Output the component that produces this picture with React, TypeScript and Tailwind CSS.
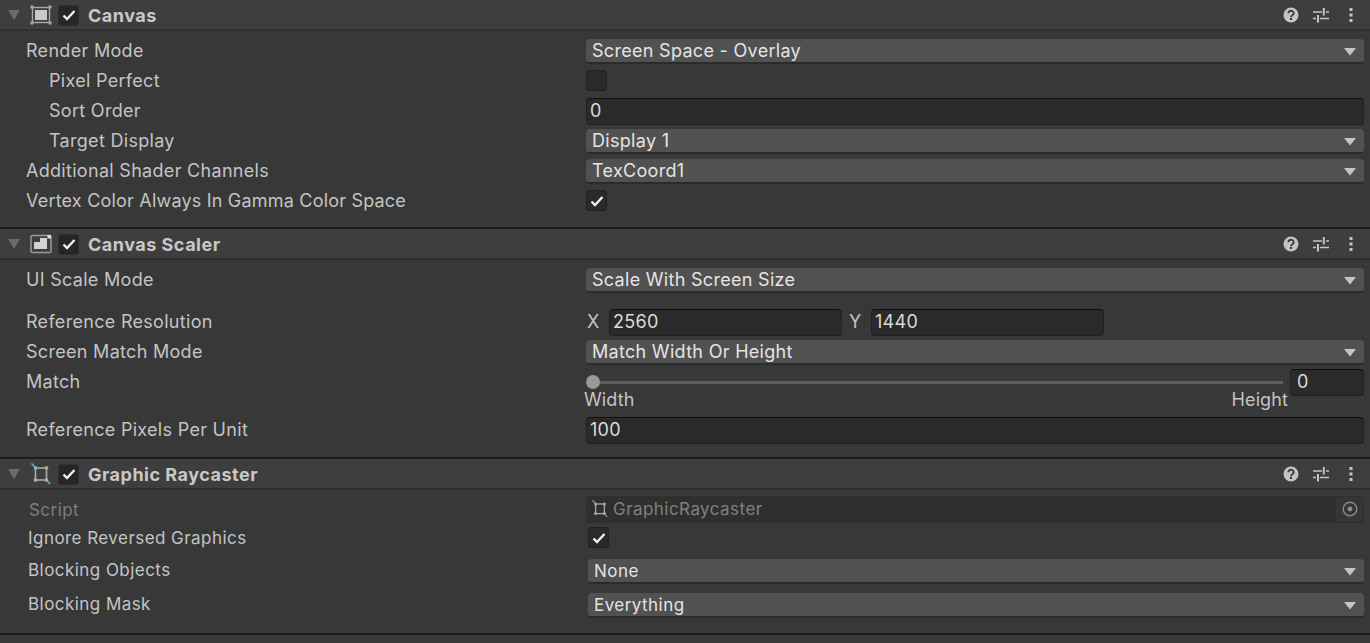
import React from 'react';

const font = { fontFamily: 'Inter, sans-serif' };

const Caret = () => (
  <svg width="14" height="9" viewBox="0 0 14 9" className="shrink-0">
    <polygon points="1,1 13,1 7,8.5" fill="#c4c4c4" />
  </svg>
);

const Check = () => (
  <svg width="14" height="12" viewBox="0 0 14 12">
    <path d="M1.5 6.5 L5 10 L12.5 2" fill="none" stroke="#f0f0f0" strokeWidth="2.4" />
  </svg>
);

const Checkbox = ({ on = false, className = '' }: { on?: boolean; className?: string }) => (
  <div
    className={`-mt-[1px] flex h-[21px] w-[21px] items-center justify-center rounded-[3px] border border-[#212121] bg-[#2a2a2a] ${className}`}
  >
    {on && <Check />}
  </div>
);

const Dropdown = ({ value }: { value: string }) => (
  <div className="flex h-[25px] flex-1 items-center justify-between rounded-[4px] border-b-2 border-[#2b2b2b] bg-[#515151] pt-[2px] pr-[7px] pl-[6px] text-[#e4e4e4]">
    <span>{value}</span>
    <Caret />
  </div>
);

const TextInput = ({ value, className = '' }: { value: string; className?: string }) => (
  <div
    className={`flex h-[27px] items-center rounded-[4px] border border-[#212121] border-t-[#0f0f0f] bg-[#2a2a2a] pl-[3px] text-[#dcdcdc] ${className}`}
  >
    {value}
  </div>
);

const Row = ({
  label,
  indent = false,
  h = 'h-[30px]',
  dim = false,
  labelClass = '',
  children,
}: {
  label: string;
  indent?: boolean;
  h?: string;
  dim?: boolean;
  labelClass?: string;
  children?: React.ReactNode;
}) => (
  <div className={`flex items-center pr-[6px] ${h}`}>
    <div
      className={`w-[586px] shrink-0 ${indent ? 'pl-[49px]' : 'pl-[26px]'} ${dim ? 'text-[#7d7d7d]' : 'text-[#c4c4c4]'} ${labelClass}`}
    >
      {label}
    </div>
    <div className="flex min-w-0 flex-1 items-center">{children}</div>
  </div>
);

const CanvasIcon = () => (
  <svg width="22" height="20" viewBox="0 0 22 20">
    <rect x="2.5" y="2.5" width="17" height="15" fill="none" stroke="#a8a8a8" strokeWidth="1.4" />
    <rect x="5" y="5" width="12" height="10" fill="#c9c9c9" />
    {[[2, 2], [20, 2], [2, 18], [20, 18]].map(([x, y]) => (
      <circle key={`${x}${y}`} cx={x} cy={y} r="1.8" fill="#a5a5a5" />
    ))}
  </svg>
);

const ScalerIcon = () => (
  <svg width="22" height="20" viewBox="0 0 22 20">
    <rect x="1" y="1.500" width="20" height="17" rx="1.500" fill="none" stroke="#9a9a9a" strokeWidth="1.500" />
    <path d="M4 8h6V4h7v11H4z" fill="#d2d2d2" />
    <rect x="17.500" y="1" width="3.500" height="3.500" fill="#e0e0e0" />
  </svg>
);

const RaycasterIcon = ({ scale = 1 }: { scale?: number }) => (
  <svg width={20 * scale} height={22 * scale} viewBox="0 0 20 22">
    <rect x="4.500" y="5" width="11" height="12" fill="none" stroke="#aaaaaa" strokeWidth="1.600" />
    {[[4.500, 5], [15.500, 5], [4.500, 17], [15.500, 17]].map(([x, y]) => (
      <circle key={`${x}${y}`} cx={x} cy={y} r="1.900" fill="#a5a5a5" />
    ))}
    <path d="M0.500 0.500 L4 4" stroke="#5fb7e0" strokeWidth="1.400" />
    <path d="M16 17.500 L19 21" stroke="#5fb7e0" strokeWidth="1.400" />
  </svg>
);

const HeaderActions = () => (
  <div className="flex items-center pr-[4px]">
    <div className="flex w-[30px] justify-center">
      <svg width="16" height="16" viewBox="0 0 16 16">
        <circle cx="8" cy="8" r="7.500" fill="#c4c4c4" />
        <path d="M5.300 6.200a2.700 2.400 0 1 1 4.100 2c-1 .6-1.400 1-1.400 2" fill="none" stroke="#383838" strokeWidth="1.800" />
        <rect x="7" y="11" width="2" height="2" fill="#383838" />
      </svg>
    </div>
    <div className="flex w-[30px] justify-center">
      <svg width="16" height="16" viewBox="0 0 16 16">
        <path d="M0 5h9M13 5h3M0 11.500h3M7 11.500h9" stroke="#c4c4c4" strokeWidth="1.600" />
        <path d="M10.800 1v7.500M5 8v7.500" stroke="#c4c4c4" strokeWidth="2" />
      </svg>
    </div>
    <div className="flex w-[30px] justify-center">
      <svg width="4" height="16" viewBox="0 0 4 16">
        <rect x="0.500" y="1" width="3" height="3" fill="#c4c4c4" />
        <rect x="0.500" y="6.500" width="3" height="3" fill="#c4c4c4" />
        <rect x="0.500" y="12" width="3" height="3" fill="#c4c4c4" />
      </svg>
    </div>
  </div>
);

const Header = ({ title, icon }: { title: string; icon: React.ReactNode }) => (
  <div className="flex h-[31px] items-center justify-between border-b-2 border-[#2f2f2f] bg-[#3e3e3e] pt-[1px]">
    <div className="flex items-center">
      <svg width="12" height="12" viewBox="0 0 12 12" className="ml-[8px]">
        <polygon points="0,1 12,1 6,11" fill="#6b6b6b" />
      </svg>
      <div className="ml-[10px] flex w-[22px] justify-center">{icon}</div>
      <div className="ml-[6px] flex h-[21px] w-[21px] items-center justify-center rounded-[3px] border border-[#2f2f2f] bg-[#262626]">
        <Check />
      </div>
      <span className="ml-[9px] pt-[1px] font-bold tracking-[0.5px] text-[#c8c8c8]">{title}</span>
    </div>
    <HeaderActions />
  </div>
);

const Divider = () => <div className="h-[2px] bg-[#1c1c1c]" />;

export default function App() {
  return (
    <div
      className="h-[643px] w-[1370px] overflow-hidden bg-[#383838] text-[18px] leading-[22px] tracking-[0.3px]"
      style={font}
    >
      <Header title="Canvas" icon={<CanvasIcon />} />
      <div className="h-[5px]" />
      <Row label="Render Mode">
        <Dropdown value="Screen Space - Overlay" />
      </Row>
      <Row label="Pixel Perfect" indent>
        <Checkbox />
      </Row>
      <Row label="Sort Order" indent>
        <TextInput value="0" className="flex-1" />
      </Row>
      <Row label="Target Display" indent>
        <Dropdown value="Display 1" />
      </Row>
      <Row label="Additional Shader Channels">
        <Dropdown value="TexCoord1" />
      </Row>
      <Row label="Vertex Color Always In Gamma Color Space" labelClass="tracking-[0.2px]">
        <Checkbox on />
      </Row>
      <div className="h-[11px]" />
      <Divider />

      <Header title="Canvas Scaler" icon={<ScalerIcon />} />
      <div className="h-[5px]" />
      <Row label="UI Scale Mode">
        <Dropdown value="Scale With Screen Size" />
      </Row>
      <div className="h-[12px]" />
      <Row label="Reference Resolution">
        <div className="flex items-center">
          <span className="w-[23px] pl-[1px] text-[#c4c4c4]">X</span>
          <TextInput value="2560" className="w-[233px]" />
          <span className="w-[29px] pl-[7px] text-[#c4c4c4]">Y</span>
          <TextInput value="1440" className="w-[233px]" />
        </div>
      </Row>
      <Row label="Screen Match Mode">
        <Dropdown value="Match Width Or Height" />
      </Row>
      <div className="flex h-[48px] pr-[6px]">
        <div className="w-[586px] shrink-0 pt-[4px] pl-[26px] text-[#c4c4c4]">Match</div>
        <div className="flex-1">
          <div className="flex h-[30px] items-center">
            <div className="h-[14px] w-[14px] shrink-0 rounded-full bg-[#9a9a9a]" />
            <div className="mr-[7px] h-[3px] flex-1 bg-[#5e5e5e]" />
            <TextInput value="0" className="w-[74px] pl-[6px]" />
          </div>
          <div className="-mt-[8px] flex justify-between pr-[76px] tracking-[0.1px] text-[#c4c4c4]">
            <span className="-ml-[2px]">Width</span>
            <span>Height</span>
          </div>
        </div>
      </div>
      <Row label="Reference Pixels Per Unit">
        <TextInput value="100" className="flex-1" />
      </Row>
      <div className="h-[12px]" />
      <Divider />

      <Header title="Graphic Raycaster" icon={<RaycasterIcon />} />
      <div className="text-[17px] tracking-[0.45px]">
        <div className="h-[5px]" />
        <Row label="Script" dim h="h-[29px]" labelClass="pl-[29px]">
          <div className="flex h-[27px] flex-1 items-center justify-between rounded-[4px] border-b-2 border-[#2f2f2f] bg-[#2f2f2f] pt-[1px] text-[#808080]">
            <div className="flex items-center pl-[6px]">
              <RaycasterIcon scale={0.8} />
              <span className="ml-[5px]">GraphicRaycaster</span>
            </div>
            <div className="mr-[1px] flex h-full w-[27px] items-center justify-center bg-[#353535]">
              <svg width="16" height="16" viewBox="0 0 16 16">
                <circle cx="8" cy="8" r="6.800" fill="none" stroke="#8a8a8a" strokeWidth="1.400" />
                <circle cx="8" cy="8" r="2.400" fill="#8a8a8a" />
              </svg>
            </div>
          </div>
        </Row>
        <div className="pl-[2px]">
          <Row label="Ignore Reversed Graphics" labelClass="pb-[2px]">
            <Checkbox on className="mb-[2px]" />
          </Row>
          <Row label="Blocking Objects" h="h-[34px]" labelClass="pb-[2px]">
            <Dropdown value="None" />
          </Row>
          <Row label="Blocking Mask" h="h-[34px]" labelClass="pb-[2px]">
            <Dropdown value="Everything" />
          </Row>
        </div>
      </div>
      <div className="h-[11px]" />
      <Divider />
    </div>
  );
}
